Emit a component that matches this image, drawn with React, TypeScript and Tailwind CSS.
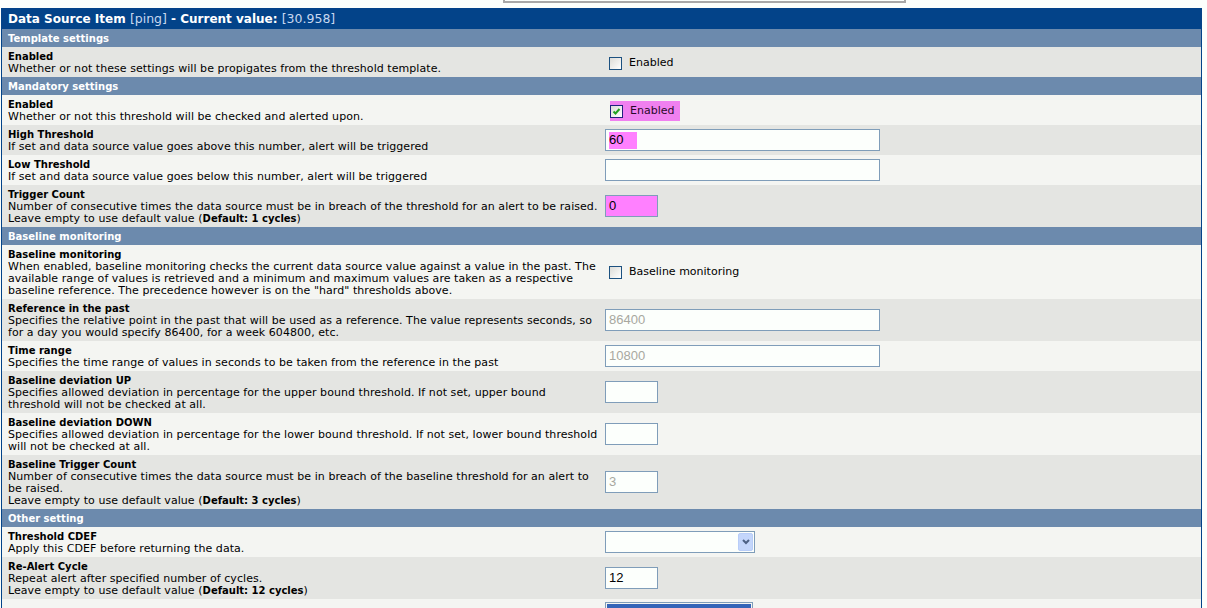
import React from "react";

const GRAY = "bg-[#e4e5e2]";
const LIGHT = "bg-[#f4f5f2]";

function Checkbox({ checked }: { checked?: boolean }) {
  return (
    <span
      className={`relative inline-block h-[13px] w-[13px] shrink-0 border ${
        checked ? "border-[#21217e]" : "border-[#1c5180]"
      } bg-gradient-to-br from-[#dcdcd7] to-white`}
    >
      {checked && (
        <svg viewBox="0 0 11 11" className="absolute left-0 top-0 h-[11px] w-[11px]">
          <path d="M2.5 5.5 L4.5 7.5 L8.5 3" fill="none" stroke="#21a121" strokeWidth="2" />
        </svg>
      )}
    </span>
  );
}

function TextInput({
  value,
  wide,
  disabled,
  pink,
  mark,
}: {
  value?: string;
  wide?: boolean;
  disabled?: boolean;
  pink?: boolean;
  mark?: boolean;
}) {
  return (
    <div
      className={`flex h-[22px] items-center border border-[#7f9db9] px-[3px] font-['Liberation_Sans',Arial,sans-serif] text-[13px] ${
        wide ? "w-[275px]" : "w-[53px]"
      } ${pink ? "bg-[#ff80ff]" : "bg-[#fcfffc]"} ${disabled ? "text-[#a8a8a0]" : "text-black"}`}
    >
      {mark ? <span className="flex h-[17px] w-[28px] items-center bg-[#ff80ff]">{value}</span> : value}
    </div>
  );
}

type Row = {
  title: string;
  desc: React.ReactNode;
  bg: string;
  control: React.ReactNode;
};

function Header({ children }: { children: React.ReactNode }) {
  return (
    <div className="col-span-2 flex h-[18px] items-center bg-[#6c8aad] px-[6px] pt-[1px] text-[10px] font-bold text-white">
      {children}
    </div>
  );
}

function Item({ row }: { row: Row }) {
  return (
    <>
      <div className={`${row.bg} px-[6px] pb-[2px] pt-[4px] tracking-[0.06px]`}>
        <div className="text-[10px] font-bold tracking-normal">{row.title}</div>
        <div>{row.desc}</div>
      </div>
      <div className={`${row.bg} flex items-center pl-[1px]`}>{row.control}</div>
    </>
  );
}

function Bold({ children }: { children: React.ReactNode }) {
  return <b className="text-[10px] tracking-normal">{children}</b>;
}

const mandatory: Row[] = [
  {
    title: "Enabled",
    desc: "Whether or not this threshold will be checked and alerted upon.",
    bg: LIGHT,
    control: (
      <div className="ml-[5px] mt-[2px] flex h-[20px] w-[70px] items-center gap-[7px] bg-[#f080f0]">
        <Checkbox checked />
        <span className="text-[#2a0a2a]">Enabled</span>
      </div>
    ),
  },
  {
    title: "High Threshold",
    desc: "If set and data source value goes above this number, alert will be triggered",
    bg: GRAY,
    control: <TextInput value="60" wide mark />,
  },
  {
    title: "Low Threshold",
    desc: "If set and data source value goes below this number, alert will be triggered",
    bg: LIGHT,
    control: <TextInput wide />,
  },
  {
    title: "Trigger Count",
    desc: (
      <>
        Number of consecutive times the data source must be in breach of the threshold for an alert to be raised.
        <br />
        Leave empty to use default value (<Bold>Default: 1 cycles</Bold>)
      </>
    ),
    bg: GRAY,
    control: <TextInput value="0" pink />,
  },
];

const baseline: Row[] = [
  {
    title: "Baseline monitoring",
    desc: 'When enabled, baseline monitoring checks the current data source value against a value in the past. The available range of values is retrieved and a minimum and maximum values are taken as a respective baseline reference. The precedence however is on the "hard" thresholds above.',
    bg: LIGHT,
    control: (
      <div className="ml-[4px] flex items-center gap-[7px]">
        <Checkbox />
        <span>Baseline monitoring</span>
      </div>
    ),
  },
  {
    title: "Reference in the past",
    desc: "Specifies the relative point in the past that will be used as a reference. The value represents seconds, so for a day you would specify 86400, for a week 604800, etc.",
    bg: GRAY,
    control: <TextInput value="86400" wide disabled />,
  },
  {
    title: "Time range",
    desc: "Specifies the time range of values in seconds to be taken from the reference in the past",
    bg: LIGHT,
    control: <TextInput value="10800" wide disabled />,
  },
  {
    title: "Baseline deviation UP",
    desc: "Specifies allowed deviation in percentage for the upper bound threshold. If not set, upper bound threshold will not be checked at all.",
    bg: GRAY,
    control: <TextInput />,
  },
  {
    title: "Baseline deviation DOWN",
    desc: "Specifies allowed deviation in percentage for the lower bound threshold. If not set, lower bound threshold will not be checked at all.",
    bg: LIGHT,
    control: <TextInput />,
  },
  {
    title: "Baseline Trigger Count",
    desc: (
      <>
        Number of consecutive times the data source must be in breach of the baseline threshold for an alert to be
        raised.
        <br />
        Leave empty to use default value (<Bold>Default: 3 cycles</Bold>)
      </>
    ),
    bg: GRAY,
    control: <TextInput value="3" disabled />,
  },
];

const other: Row[] = [
  {
    title: "Threshold CDEF",
    desc: "Apply this CDEF before returning the data.",
    bg: LIGHT,
    control: (
      <div className="flex h-[22px] w-[150px] items-center justify-end border border-[#7f9db9] bg-[#fcfffc] pr-[1px]">
        <div className="flex h-[18px] w-[15px] items-center justify-center rounded-[2px] border border-[#b8cdf8] bg-[#c4d6fb]">
          <svg viewBox="0 0 8 6" className="h-[6px] w-[8px]">
            <path d="M1 1 L4 4 L7 1" fill="none" stroke="#4d6185" strokeWidth="2" />
          </svg>
        </div>
      </div>
    ),
  },
  {
    title: "Re-Alert Cycle",
    desc: (
      <>
        Repeat alert after specified number of cycles.
        <br />
        Leave empty to use default value (<Bold>Default: 12 cycles</Bold>)
      </>
    ),
    bg: GRAY,
    control: <TextInput value="12" />,
  },
];

export default function App() {
  return (
    <div className="h-[608px] overflow-hidden bg-[#fcfffc] font-['DejaVu_Sans',Verdana,sans-serif] text-[11px] leading-[12px] text-black">
      <div className="ml-[503px] h-[3px] w-[403px] border-x-2 border-b-2 border-[#a8a8a8]" />
      <div className="ml-[1px] mt-[5px] w-[1201px] border-r border-l border-[#034389]">
        <div className="flex h-[21px] items-center whitespace-pre bg-[#034389] px-[6px] pt-[1px] text-[12.5px] text-white">
          <b className="text-[12px]">Data Source Item </b>
          <span className="text-[#c8d8f0]">[ping]</span>
          <b className="text-[12px]"> - Current value: </b>
          <span className="text-[#c8d8f0]">[30.958]</span>
        </div>
        <div className="grid grid-cols-[602px_1fr]">
          <Header>Template settings</Header>
          <Item
            row={{
              title: "Enabled",
              desc: "Whether or not these settings will be propigates from the threshold template.",
              bg: GRAY,
              control: (
                <div className="ml-[4px] mt-[2px] flex items-center gap-[7px]">
                  <Checkbox />
                  <span>Enabled</span>
                </div>
              ),
            }}
          />
          <Header>Mandatory settings</Header>
          {mandatory.map((r) => (
            <Item key={r.title} row={r} />
          ))}
          <Header>Baseline monitoring</Header>
          {baseline.map((r) => (
            <Item key={r.title} row={r} />
          ))}
          <Header>Other setting</Header>
          {other.map((r) => (
            <Item key={r.title} row={r} />
          ))}
          <div className={`${LIGHT} h-[30px]`} />
          <div className={`${LIGHT} pl-[1px] pt-[3px]`}>
            <div className="h-[24px] w-[148px] border border-[#7f9db9] p-[1px]">
              <div className="h-full bg-[#3465b8]" />
            </div>
          </div>
        </div>
      </div>
    </div>
  );
}
